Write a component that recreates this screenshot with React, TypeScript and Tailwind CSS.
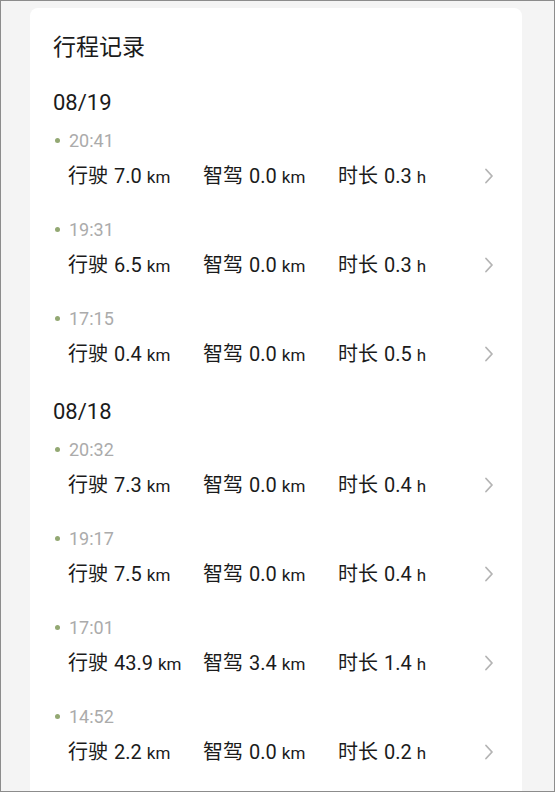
const days = [
  {
    date: '08/19',
    trips: [
      { time: '20:41', drive: '7.0', smart: '0.0', hours: '0.3' },
      { time: '19:31', drive: '6.5', smart: '0.0', hours: '0.3' },
      { time: '17:15', drive: '0.4', smart: '0.0', hours: '0.5' },
    ],
  },
  {
    date: '08/18',
    trips: [
      { time: '20:32', drive: '7.3', smart: '0.0', hours: '0.4' },
      { time: '19:17', drive: '7.5', smart: '0.0', hours: '0.4' },
      { time: '17:01', drive: '43.9', smart: '3.4', hours: '1.4' },
      { time: '14:52', drive: '2.2', smart: '0.0', hours: '0.2' },
    ],
  },
];

function Stat({ label, value, unit }: { label: string; value: string; unit: string }) {
  return (
    <div className="w-[135px] flex items-baseline whitespace-nowrap">
      <span className="text-[20px]">{label}</span>
      <span className="text-[20px] ml-[6px]">{value}</span>
      <span className="text-[17px] ml-[5px]">{unit}</span>
    </div>
  );
}

function Chevron() {
  return (
    <svg width="10" height="16" viewBox="0 0 10 16" fill="none" className="text-[#b4b4b4]">
      <polyline points="2,1.5 8,8 2,14.5" stroke="currentColor" strokeWidth="1.8" strokeLinecap="round" strokeLinejoin="round" />
    </svg>
  );
}

export default function App() {
  return (
    <div
      className="w-[555px] h-[792px] bg-[#f4f4f4] border border-[#8c8c8c] overflow-hidden text-[#1b1b1b]"
      style={{ fontFamily: 'Roboto, "Noto Sans CJK SC", sans-serif' }}
    >
      <div className="ml-[29px] mt-[7px] w-[492px] h-[800px] bg-white rounded-t-[8px] pt-[24px] pl-[23px] pr-[28px]">
        <h1 className="h-8 flex items-center text-[23px] font-normal">行程记录</h1>

        {days.map((day, di) => (
          <div key={day.date} className={di === 0 ? 'mt-[22px]' : 'mt-[27px]'}>
            <div className="h-8 flex items-center text-[22px]">{day.date}</div>
            <div className="mt-[10px] flex flex-col gap-[27px]">
              {day.trips.map(trip => (
                <div key={trip.time}>
                  <div className="h-6 flex items-center">
                    <span className="w-[5px] h-[5px] rounded-full bg-[#93a873] ml-[2px]" />
                    <span className="ml-[9px] text-[18px] text-[#ababab]">{trip.time}</span>
                  </div>
                  <div className="mt-[10px] h-7 flex items-center pl-[15px]">
                    <Stat label="行驶" value={trip.drive} unit="km" />
                    <Stat label="智驾" value={trip.smart} unit="km" />
                    <Stat label="时长" value={trip.hours} unit="h" />
                    <div className="ml-auto flex items-center">
                      <Chevron />
                    </div>
                  </div>
                </div>
              ))}
            </div>
          </div>
        ))}
      </div>
    </div>
  );
}
